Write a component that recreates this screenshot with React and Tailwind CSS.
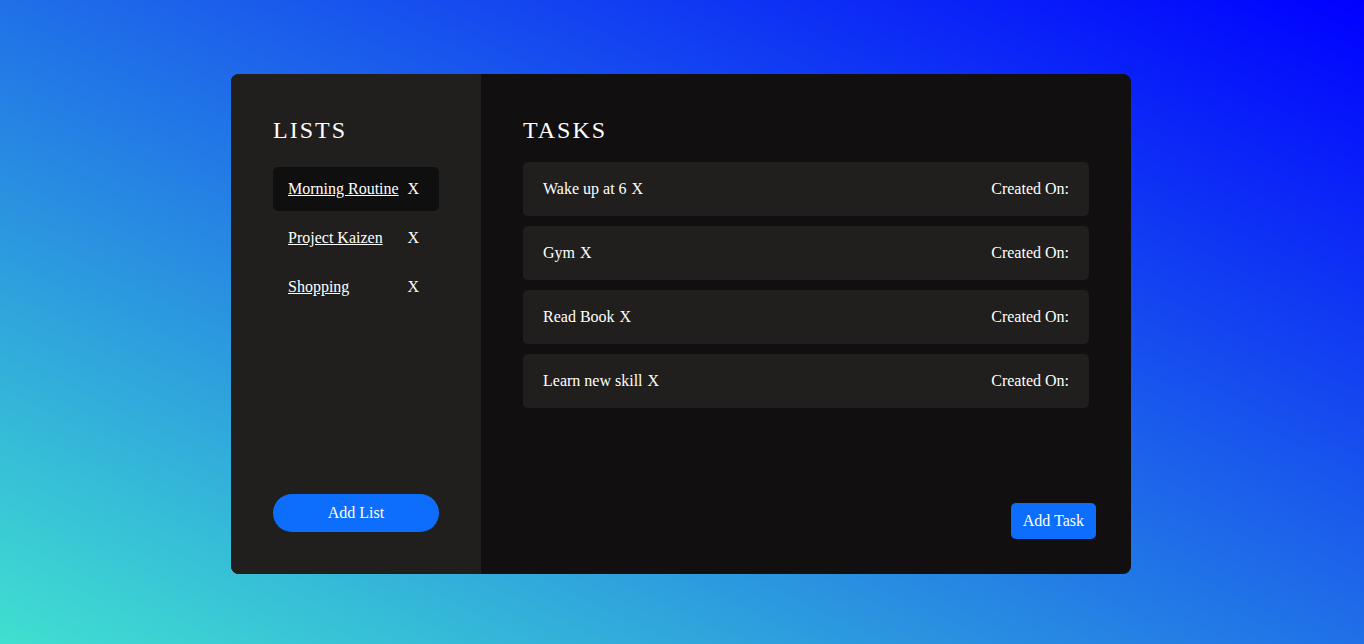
const lists = ["Morning Routine", "Project Kaizen", "Shopping"];
const tasks = ["Wake up at 6", "Gym", "Read Book", "Learn new skill"];

function ListItem({ name, active }) {
  return (
    <li
      className={
        active
          ? "flex items-center justify-between rounded-[5px] bg-[#0f0f0f] py-2.5 pr-5 pl-[15px]"
          : "flex items-center justify-between rounded-[5px] py-2.5 pr-5 pl-[15px]"
      }
    >
      <a href="#" className="whitespace-nowrap underline">
        {name}
      </a>
      <button type="button" aria-label={`Delete ${name}`}>
        X
      </button>
    </li>
  );
}

function TaskItem({ name }) {
  return (
    <li className="flex items-center justify-between rounded-[5px] bg-[#201f1d] px-5 py-[15px]">
      <span className="flex gap-[5px]">
        {name}
        <button type="button" aria-label={`Delete ${name}`}>
          X
        </button>
      </span>
      <span>Created On:</span>
    </li>
  );
}

export default function App() {
  return (
    <div className="flex min-h-screen items-center justify-center bg-[linear-gradient(to_right_top,#40e0d0,#0000ff)] pt-1 pr-0.5 font-['Liberation_Serif',serif] text-base text-white">
      <main className="flex min-h-[500px] w-full max-w-[900px] overflow-hidden rounded-lg bg-[#110f10]">
        <aside className="flex w-[250px] shrink-0 flex-col bg-[#201f1d] px-[42px] pt-10 pb-[42px]">
          <h2 className="text-2xl tracking-[2px] uppercase">Lists</h2>
          <ul className="mt-[21px] flex flex-col gap-[5px]">
            {lists.map((name, i) => (
              <ListItem key={name} name={name} active={i === 0} />
            ))}
          </ul>
          <button
            type="button"
            className="mt-auto rounded-full bg-[#0d6efd] py-[7px]"
          >
            Add List
          </button>
        </aside>
        <section className="flex flex-1 flex-col pt-10 pb-[35px]">
          <h2 className="px-[42px] text-2xl tracking-[2px] uppercase">Tasks</h2>
          <ul className="mt-4 flex flex-col gap-2.5 px-[42px]">
            {tasks.map((name) => (
              <TaskItem key={name} name={name} />
            ))}
          </ul>
          <button
            type="button"
            className="mt-auto mr-[35px] self-end rounded-[5px] bg-[#0d6efd] px-3 py-1.5"
          >
            Add Task
          </button>
        </section>
      </main>
    </div>
  );
}
